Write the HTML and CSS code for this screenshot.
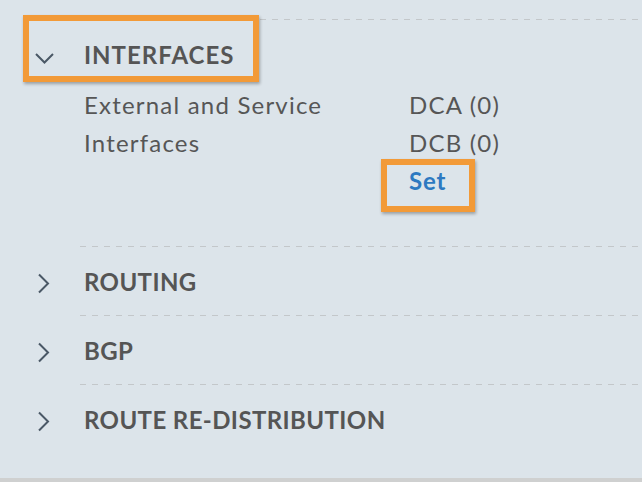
FILE: index.html
```html
<!DOCTYPE html>
<html lang="en">
<head>
<meta charset="utf-8">
<title>Interfaces</title>
<link rel="stylesheet" href="styles.css">
</head>
<body>
<div class="page">
  <div class="panel">
    <section class="sec sec-open">
      <div class="rule"></div>
      <div class="chev chev-down">
        <svg width="20" height="20" viewBox="0 0 20 20"><polyline points="2,9 10.5,17.5 19,9" /></svg>
      </div>
      <h2 class="title">INTERFACES</h2>
      <span class="hl hl-title"></span>
      <div class="body">
        <div class="kv">
          <div class="k">External and Service</div>
          <div class="v">DCA (0)</div>
          <div class="k">Interfaces</div>
          <div class="v">DCB (0)</div>
          <div class="k"></div>
          <div class="v"><a class="set">Set</a></div>
        </div>
      </div>
    </section>
    <section class="sec">
      <div class="rule"></div>
      <div class="chev">
        <svg width="20" height="20" viewBox="0 0 20 20"><polyline points="5,2.5 14,11.5 5,20.5" /></svg>
      </div>
      <h2 class="title">ROUTING</h2>
    </section>
    <section class="sec">
      <div class="rule"></div>
      <div class="chev">
        <svg width="20" height="20" viewBox="0 0 20 20"><polyline points="5,2.5 14,11.5 5,20.5" /></svg>
      </div>
      <h2 class="title">BGP</h2>
    </section>
    <section class="sec">
      <div class="rule"></div>
      <div class="chev">
        <svg width="20" height="20" viewBox="0 0 20 20"><polyline points="5,2.5 14,11.5 5,20.5" /></svg>
      </div>
      <h2 class="title">ROUTE RE-DISTRIBUTION</h2>
    </section>
  </div>
  <div class="footer-bar"></div>
</div>
</body>
</html>
```

FILE: styles.css
```css
html, body {
  margin: 0;
  padding: 0;
}
body {
  background: #dce4ea;
  font-family: Lato, "Open Sans", sans-serif;
  color: #565656;
}
.page {
  height: 482px;
  display: flex;
  flex-direction: column;
  overflow: hidden;
}
.panel {
  flex: 1;
  padding-top: 19px;
}
.footer-bar {
  height: 4px;
  background: #cfd0d0;
}
.sec {
  position: relative;
  display: grid;
  grid-template-columns: 80px 1fr;
  grid-template-rows: 1px auto auto;
  padding-bottom: 18px;
}
.rule {
  grid-column: 2;
  grid-row: 1;
  height: 1px;
  background: repeating-linear-gradient(to right, #c3c7ca 0 6px, transparent 6px 12px);
}
.chev {
  grid-column: 1;
  grid-row: 2;
  display: flex;
  align-items: center;
  padding-left: 34px;
  padding-top: 20px;
}
.chev svg {
  display: block;
  overflow: visible;
}
.chev polyline {
  fill: none;
  stroke: #4a5866;
  stroke-width: 2;
}
.title {
  grid-column: 2;
  grid-row: 2;
  margin: 0;
  padding: 20px 0 0 4px;
  font-size: 24px;
  line-height: 30px;
  font-weight: 700;
  letter-spacing: 0.4px;
  color: #555555;
}
.sec-open .title {
  letter-spacing: 1px;
}
.body {
  grid-column: 2;
  grid-row: 3;
  padding: 16px 0 28px 4px;
}
.kv {
  display: grid;
  grid-template-columns: 325px auto;
  font-size: 24px;
  line-height: 38px;
  letter-spacing: 1.2px;
}
.set {
  display: inline-block;
  position: relative;
  color: #2d79c1;
  font-weight: 700;
  letter-spacing: 0.8px;
}
.set::after {
  content: "";
  position: absolute;
  left: -28px;
  top: -3px;
  width: 82px;
  height: 41px;
  border: 6px solid #f29a38;
  box-shadow: 1px 2px 3px rgba(0, 0, 0, 0.3);
}
.hl {
  position: absolute;
}
.hl-title {
  left: 23px;
  top: -4px;
  width: 224px;
  height: 55px;
  border: 6px solid #f29a38;
  box-shadow: 1px 2px 3px rgba(0, 0, 0, 0.3);
}
```
